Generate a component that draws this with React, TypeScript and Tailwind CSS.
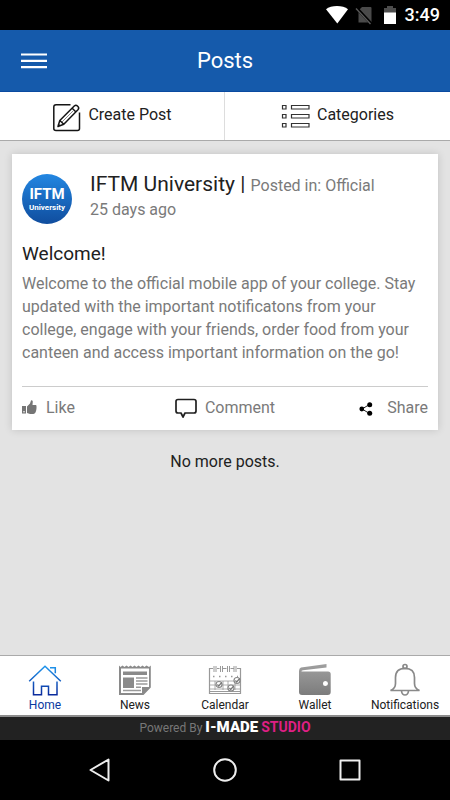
import React from "react";

function StatusBar() {
  return (
    <div className="flex h-[30px] shrink-0 items-center justify-end bg-black pr-[10px] text-white">
      <svg className="mr-[7px]" width="24" height="20" viewBox="0 0 24 20" fill="#fff" aria-hidden="true">
        <path d="M2 4.2C7-.2 19-.2 24 4.2L13.3 18.4Z" />
      </svg>
      <svg className="mr-[10px]" width="18" height="20" viewBox="0 0 18 20" aria-hidden="true">
        <path d="M7 2h8.500q1 0 1 1v14.500H3.500V5.500Z" fill="#4a4a4a" />
        <path d="M1.500 3 16 18.500" stroke="#000" strokeWidth="3.200" />
        <path d="M1 3.500 15.500 19" stroke="#5a5a5a" strokeWidth="1.300" />
      </svg>
      <svg className="mr-[8px]" width="14" height="20" viewBox="0 0 14 20" aria-hidden="true">
        <path d="M4 1h6v2h3v5H1V3h3Z" fill="#4d4d4d" />
        <path d="M1 7.500h12V19H1Z" fill="#fff" />
      </svg>
      <time className="text-[18px] leading-[22px] font-medium">3:49</time>
    </div>
  );
}

function Header() {
  return (
    <header className="grid h-[62px] shrink-0 grid-cols-[68px_1fr_68px] items-center border-b border-[#0a4aa0] bg-[#155aab] text-white">
      <button type="button" aria-label="Menu" className="flex h-full items-center pl-[21px]">
        <svg width="26" height="18" viewBox="0 0 26 18" stroke="#fff" strokeWidth="2.200" aria-hidden="true">
          <path d="M0 2.500h26M0 8.800h26M0 15.200h26" />
        </svg>
      </button>
      <h1 className="text-center text-[22px] leading-[26px]">Posts</h1>
    </header>
  );
}

function Actions() {
  return (
    <div className="grid h-[49px] shrink-0 grid-cols-2 border-b border-[#aaaaaa] bg-white text-[16px] text-[#212121]">
      <button type="button" className="flex items-center justify-center gap-[7px] border-r border-[#dddddd] pb-[2px]">
        <svg className="mt-1" width="29" height="29" viewBox="0 0 29 29" fill="none" stroke="#151515" strokeWidth="1.500" strokeLinejoin="round" aria-hidden="true">
          <path d="M18.500 1.800H4Q1.800 1.800 1.800 4v21.500Q1.800 27.500 4 27.500h21.500q2 0 2-2V9.500" />
          <path d="m6 23.500 1.800-6L22.500 2.800q1.500-1.200 3.200.4t.5 3.200L11.800 21.200ZM20.200 5.200l4 4M7.800 17.500l4 3.700M6 23.500l.5-2 1.500 1.400Z" />
          <path d="m10 19 11-11" strokeWidth=".5" />
        </svg>
        Create Post
      </button>
      <button type="button" className="flex items-center justify-center gap-[7px] pb-[2px]">
        <svg className="mt-[3px]" width="29" height="25" viewBox="0 0 29 25" fill="none" stroke="#333" strokeWidth="1.200" aria-hidden="true">
          <path d="M1.500 1.500h3.500v3.500h-3.500ZM1.500 10.500h3.500v3.500h-3.500ZM1.500 19.500h3.500v3.500h-3.500ZM10.500 1.500h17.500v3.500h-17.500ZM10.500 10.500h17.500v3.500h-17.500ZM10.500 19.500h17.500v3.500h-17.500Z" />
        </svg>
        Categories
      </button>
    </div>
  );
}

function Post() {
  return (
    <article className="bg-white px-[10px] pt-[18px] text-[16px] text-[#7a7a7a] shadow-[0_0_8px_rgba(0,0,0,0.15)]">
      <div className="flex gap-[18px]">
        <div className="mt-[2px] flex size-[50px] shrink-0 flex-col items-center justify-center rounded-full bg-linear-to-b from-[#2387e2] to-[#104d9e] text-white">
          <span className="text-[15px] leading-[17px] font-bold">IFTM</span>
          <span className="text-[8px] leading-[10px] font-bold">University</span>
        </div>
        <div>
          <h2 className="text-[21px] leading-[24px] text-[#212121]">
            IFTM University | <span className="text-[16px] text-[#7a7a7a]">Posted in: Official</span>
          </h2>
          <p className="leading-[24px]">25 days ago</p>
        </div>
      </div>
      <h3 className="mt-[18px] text-[19px] leading-[24px] text-[#212121]">Welcome!</h3>
      <p className="mt-[6px] leading-[23px]">
        Welcome to the official mobile app of your college. Stay updated with the important notificatons from your
        college, engage with your friends, order food from your canteen and access important information on the go!
      </p>
      <div className="mt-[22px] grid h-[44px] grid-cols-3 border-t border-[#cccccc]">
        <button type="button" className="flex items-center gap-[9px] pb-[2px]">
          <svg width="15" height="15" viewBox="0 0 15 15" fill="#757575" aria-hidden="true">
            <path d="M0 6h4v7.500H0ZM5 6.500l3-3L9 .4q1.500-.3 1.800 1.200L10.500 5H14q1 .8.400 2 .5 1-.1 2 .3 1-.4 1.900.1 1.300-.8 1.900-.5 1.200-2 1.200H8L5 13Z" />
            <circle cx="2" cy="11.800" r=".8" fill="#fff" />
          </svg>
          Like
        </button>
        <button type="button" className="flex items-center justify-center gap-[8px] pb-[2px]">
          <svg width="22" height="20" viewBox="0 0 22 20" fill="none" stroke="#202020" strokeWidth="1.700" strokeLinejoin="round" aria-hidden="true">
            <path d="M3 1.500h16q2 0 2 2v9.500q0 2-2 2h-9l-2 4-2-4H3q-2 0-2-2V3.500q0-2 2-2Z" />
          </svg>
          Comment
        </button>
        <button type="button" className="flex items-center justify-end gap-[14px] pb-[2px]">
          <svg className="mt-[2px]" width="14" height="14" viewBox="0 0 14 14" aria-hidden="true">
            <path d="M10.500 2.500 3 7l7.500 4.500" fill="none" stroke="#222" />
            <circle cx="2.800" cy="7" r="2.400" />
            <circle cx="10.700" cy="2.700" r="2.500" />
            <circle cx="10.700" cy="11.200" r="2.500" />
          </svg>
          Share
        </button>
      </div>
    </article>
  );
}

function HomeIcon() {
  return (
    <svg width="34" height="34" viewBox="0 0 34 34" fill="none" stroke="url(#homeBlue)" strokeWidth="1.500" aria-hidden="true">
      <defs>
        <linearGradient id="homeBlue" gradientUnits="userSpaceOnUse" x1="0" y1="2" x2="0" y2="32">
          <stop stopColor="#209af0" />
          <stop offset="1" stopColor="#0a2a9c" />
        </linearGradient>
      </defs>
      <path d="M1.200 18.200 17 3.200l15.800 15M22 4.700h5.300v5.500M5.500 18.500v13.300h8v-8.500h7v8.500h8.500V18.500" />
    </svg>
  );
}

function NewsIcon() {
  return (
    <svg width="34" height="34" viewBox="0 0 34 34" aria-hidden="true">
      <path
        fill="#8a8a8a"
        fillRule="evenodd"
        d="M1 2.500 2.500 4 4.500 2.500 6.500 4l2-1.500 2 1.500 2-1.500 2 1.500 2-1.500 2 1.500 2-1.500 2 1.500 2-1.500 2 1.500 2-1.500L31 4l1.800-1.500v22L25.500 32H1ZM3 5.500v24.500h21v-6h7V5.500Z"
      />
      <path fill="#8a8a8a" d="M5 8.500h24v3.500h-24ZM5 14.500h11v10.500H5Z" />
      <path stroke="#9a9a9a" strokeWidth="1.400" d="M18 15h11.500M18 18h11.500M18 21h11.500M18 24.300h5M5 27.500h18" />
    </svg>
  );
}

function Tick({ x, y }: { x: number; y: number }) {
  return (
    <g>
      <circle cx={x} cy={y} r="3" fill="#fff" stroke="#888" strokeWidth="1.200" />
      <path d={`M${x - 1.6} ${y}l1.300 1.500 3-3.500`} fill="none" stroke="#777" strokeWidth="1.200" />
    </g>
  );
}

function CalendarIcon() {
  return (
    <svg width="34" height="34" viewBox="0 0 34 34" aria-hidden="true">
      <g fill="none" stroke="#999" strokeWidth="1.200">
        <path d="M5 5.500H1.500v25h31V5.500H29M9 5.500h2.500M15 5.500h3.500M22.500 5.500H26" />
        <path d="M6 3v6M8 3v6M12.500 3v6M14.500 3v6M19.500 3v6M21.500 3v6M26 3v6M28 3v6" strokeWidth="1" />
        <path d="M1.500 18h31M1.500 22h31M1.500 26h31M7 18v9M15 18v9M20 18v9M27 18v9" strokeWidth=".8" />
        <path d="M1.500 28.500h31" strokeWidth="1" />
        <path d="M5 13.500h25" strokeWidth="1.500" strokeDasharray="1.500 4.500" />
      </g>
      <Tick x={11} y={21.5} />
      <Tick x={29} y={17.5} />
      <Tick x={23} y={25} />
    </svg>
  );
}

function WalletIcon() {
  return (
    <svg width="34" height="34" viewBox="0 0 34 34" aria-hidden="true">
      <defs>
        <linearGradient id="walletGrey" x1="0" y1="0" x2="0" y2="1">
          <stop stopColor="#a0a0a0" />
          <stop offset="1" stopColor="#7c7c7c" />
        </linearGradient>
      </defs>
      <path
        fill="url(#walletGrey)"
        fillRule="evenodd"
        d="M3 4.500 28.500 1v3.500L5 7.200q-2 .2-1.500 1.300H30q2.700 0 2.700 2.500v18q0 3-3 3H4q-3 0-3-3V8Q1 5 3 4.500ZM27.500 18a2.500 2.500 0 1 0 0 5 2.500 2.500 0 0 0 0-5Z"
      />
    </svg>
  );
}

function BellIcon() {
  return (
    <svg width="34" height="34" viewBox="0 0 34 34" fill="none" stroke="#898989" strokeWidth="1.700" aria-hidden="true">
      <circle cx="17" cy="3.500" r="2" />
      <path d="M2.500 27.500h29q-5-2-5-7V14.500q0-9.200-9.500-9.200t-9.500 9.200v6q0 5-5 7ZM13.500 28q.5 4 3.500 4t3.500-4" />
    </svg>
  );
}

const tabs = [
  { label: "Home", Icon: HomeIcon, active: true },
  { label: "News", Icon: NewsIcon, active: false },
  { label: "Calendar", Icon: CalendarIcon, active: false },
  { label: "Wallet", Icon: WalletIcon, active: false },
  { label: "Notifications", Icon: BellIcon, active: false },
];

function TabBar() {
  return (
    <nav className="grid h-[62px] shrink-0 grid-cols-5 border-t border-b-2 border-t-[#aaaaaa] border-b-[#8d8d8d] bg-white">
      {tabs.map(({ label, Icon, active }) => (
        <a
          key={label}
          href="#"
          className={`flex flex-col items-center pt-[7px] text-[12px] leading-[16px] ${active ? "text-[#0a3a9f]" : "text-[#212121]"}`}
        >
          <Icon />
          {label}
        </a>
      ))}
    </nav>
  );
}

function SystemBar() {
  return (
    <div className="flex h-[60px] shrink-0 items-center justify-center gap-[101px] bg-black">
      <button type="button" aria-label="Back">
        <svg width="24" height="24" viewBox="0 0 24 24" fill="none" stroke="#eee" strokeWidth="2" strokeLinejoin="round" aria-hidden="true">
          <path d="M2.500 12 20.500 1.500v21Z" />
        </svg>
      </button>
      <button type="button" aria-label="Home screen">
        <svg width="24" height="24" viewBox="0 0 24 24" fill="none" stroke="#eee" strokeWidth="2" aria-hidden="true">
          <circle cx="12" cy="12" r="10.800" />
        </svg>
      </button>
      <button type="button" aria-label="Recent apps">
        <svg width="24" height="24" viewBox="0 0 24 24" fill="none" stroke="#eee" strokeWidth="2" strokeLinejoin="round" aria-hidden="true">
          <path d="M2.500 2.500h19v19h-19Z" />
        </svg>
      </button>
    </div>
  );
}

export default function App() {
  return (
    <div className="flex min-h-screen flex-col bg-[#e3e3e3] font-[Roboto,sans-serif]">
      <StatusBar />
      <Header />
      <Actions />
      <main className="flex-1 px-[12px] pt-[13px]">
        <Post />
        <p className="mt-[20px] text-center text-[16px] leading-[24px] text-[#212121]">No more posts.</p>
      </main>
      <TabBar />
      <footer className="flex h-[23px] shrink-0 items-center justify-center gap-[3px] bg-[#222222] pb-[2px] text-[12px] text-[#777777]">
        <span>Powered By</span>
        <span className="flex items-center gap-[3px]">
          <b className="text-[15px] font-black text-white">I-MADE</b>
          <b className="text-[14px] text-[#df1f84]">STUDIO</b>
        </span>
      </footer>
      <SystemBar />
    </div>
  );
}
